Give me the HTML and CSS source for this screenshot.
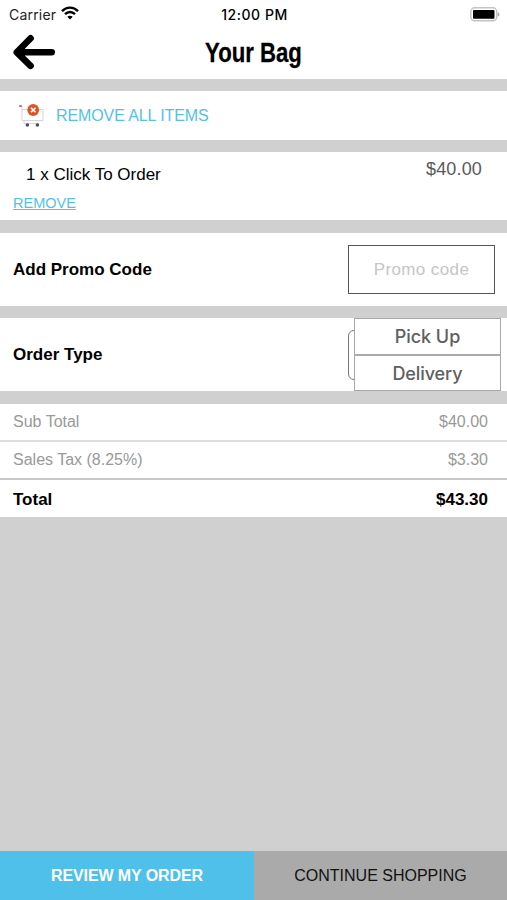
FILE: index.html
```html
<!DOCTYPE html>
<html lang="en">
<head>
<meta charset="utf-8">
<title>Your Bag</title>
<link rel="stylesheet" href="styles.css">
</head>
<body>
<div class="screen">
  <header class="header">
    <div class="status">
      <div class="carrier"><span>Carrier</span>
        <svg class="wifi" width="18" height="14" viewBox="0 0 18 14" fill="none" stroke="#000" stroke-width="2.4"><path d="M1 5.1C5.5.4 12.5.4 17 5.1"/><path d="M4 8.2c2.9-2.9 7.1-2.9 10 0"/><path d="M9 13.5 6.3 10.8c1.5-1.4 3.9-1.4 5.4 0z" fill="#000" stroke="none"/></svg>
      </div>
      <time class="time">12:00 PM</time>
      <svg class="battery" width="31" height="15" viewBox="0 0 31 15"><rect x="1.8" y=".8" width="26" height="13" rx="4" fill="#fff" stroke="#c4c4c4" stroke-width="1.5"/><rect x="4" y="3" width="21.5" height="8.8" rx="1"/><path d="M28.8 5.3c2.3.9 2.3 3.3 0 4.2z" fill="#aaa"/></svg>
    </div>
    <div class="titlebar">
      <svg class="back" width="43" height="36" viewBox="0 0 43 36" fill="none" stroke="#000" stroke-width="6.6" stroke-linecap="round" stroke-linejoin="round"><path d="M18.6 4.3 5 18.3 18.6 31.8z" stroke="none"/><path d="M18.6 4.3 4.8 18.3 18.6 31.8"/><path d="M7 18.3H39.7"/><path d="M5 18.3 13 11v14.6z" fill="#000" stroke="none"/></svg>
      <h1 class="title">Your Bag</h1>
    </div>
  </header>

  <section class="card clear">
    <svg class="cart" width="27" height="24" viewBox="0 0 27 24" fill="none"><path d="M1.5 2H4v14.5h21V5.5H4M6 16.5v3h15" stroke="#d3d5da" stroke-width="1"/><rect x="1" y="1" width="3" height="2" rx="1" fill="#c76a76"/><circle cx="9.4" cy="21" r="1.8" fill="#4a5060"/><circle cx="19.4" cy="21" r="1.8" fill="#4a5060"/><circle cx="15.2" cy="6" r="5.9" fill="#dc5426"/><path d="m12.9 3.7 4.6 4.6m0-4.6-4.6 4.6" stroke="#fff" stroke-width="1.6"/></svg>
    <span class="clear-text">REMOVE ALL ITEMS</span>
  </section>

  <section class="card item">
    <div>
      <div class="item-name">1 x Click To Order</div>
      <a class="remove">REMOVE</a>
    </div>
    <span class="item-price">$40.00</span>
  </section>

  <section class="card option">
    <span class="label promo-label">Add Promo Code</span>
    <div class="promo">Promo code</div>
  </section>

  <section class="card option">
    <span class="label type-label">Order Type</span>
    <div class="select"></div>
    <div class="menu"><div class="choice">Pick Up</div><div class="choice">Delivery</div></div>
  </section>

  <section class="totals">
    <div class="row"><span>Sub Total</span><span class="amount">$40.00</span></div>
    <div class="row tax"><span>Sales Tax (8.25%)</span><span class="amount">$3.30</span></div>
    <div class="row total"><span>Total</span><span>$43.30</span></div>
  </section>

  <footer class="footer">
    <div class="button review">REVIEW MY ORDER</div>
    <div class="button shopping">CONTINUE SHOPPING</div>
  </footer>
</div>
</body>
</html>
```

FILE: styles.css
```css
* { box-sizing: border-box; }
body { margin: 0; font-family: "Liberation Sans", Arial, sans-serif; color: #000; }
.screen { width: 507px; height: 900px; display: flex; flex-direction: column; background: #d0d0d0; overflow: hidden; white-space: nowrap; }
svg { display: block; flex: none; }
.header { height: 79px; background: #fff; margin-bottom: 12px; }
.status { height: 27px; padding: 0 7px 0 9px; display: grid; grid-template-columns: 1fr auto 1fr; align-items: center; font: 14px/27px Inter, sans-serif; }
.carrier { display: flex; align-items: center; gap: 5px; color: #222; letter-spacing: .2px; }
.wifi { margin-top: -2px; }
.time { font-weight: 500; font-size: 14px; letter-spacing: .55px; padding-top: 1px; }
.battery { justify-self: end; }
.titlebar { height: 52px; padding-left: 12px; display: grid; grid-template-columns: 43px 1fr 55px; align-items: start; }
.back { margin-top: 7px; }
.title { margin: 10px 0 0; text-align: center; font: bold 27px/32px "Liberation Sans Narrow", "Liberation Sans", sans-serif; transform: scaleX(.82); -webkit-text-stroke: .3px #000; }
.card { position: relative; background: #fff; display: flex; margin-bottom: 12px; }
.clear { height: 49px; padding: 0 0 0 18px; align-items: center; }
.clear-text { margin-left: 11px; font-size: 16px; letter-spacing: -.1px; color: #56bfe5; }
.item { height: 68px; padding: 0 25px 0 13px; justify-content: space-between; margin-bottom: 13px; }
.item-name { margin: 12px 0 0 13px; font-size: 17px; line-height: 22px; }
.remove { display: block; margin-top: 8px; font-size: 14.5px; line-height: 18px; color: #56bfe5; text-decoration: underline; }
.item-price { margin-top: 6px; font-size: 18px; letter-spacing: .15px; line-height: 22px; color: #595959; }
.option { height: 73px; padding: 0 12px 0 13px; align-items: center; justify-content: space-between; }
.label { font-size: 17px; font-weight: bold; }
.type-label { padding-top: 1px; }
.promo { width: 147px; height: 49px; border: 1.5px solid #555; text-align: center; font-size: 17px; line-height: 47px; color: #c6c6c6; letter-spacing: .4px; }
.select { width: 147px; height: 50px; border: 1px solid #777; border-radius: 6px; }
.menu { position: absolute; left: 354px; top: 0; width: 147px; height: 73px; border: 1px solid #a8a8a8; background: #fff; }
.choice { height: 35px; text-align: center; font: 500 18px/36px Inter, sans-serif; letter-spacing: -.05px; color: #606060; }
.choice + .choice { height: 36px; border-top: 2px solid #aaa; line-height: 35px; letter-spacing: -.1px; }
.totals { margin-top: 1px; background: #fff; height: 113px; }
.row { height: 38px; padding: 0 19px 0 13px; display: flex; justify-content: space-between; font-size: 16px; line-height: 36px; color: #999; border-bottom: 2px solid #dedede; }
.tax { border-bottom-color: #c8c8c8; }
.total { height: 37px; border: 0; font-weight: bold; font-size: 17px; line-height: 39px; color: #000; }
.footer { height: 49px; margin-top: auto; display: grid; grid-template-columns: 254px 253px; }
.button { text-align: center; font-size: 16px; line-height: 49px; }
.review { background: #4ec0e9; color: #fff; font-weight: bold; letter-spacing: -.1px; }
.shopping { background: #aaa; color: #111; }
```
